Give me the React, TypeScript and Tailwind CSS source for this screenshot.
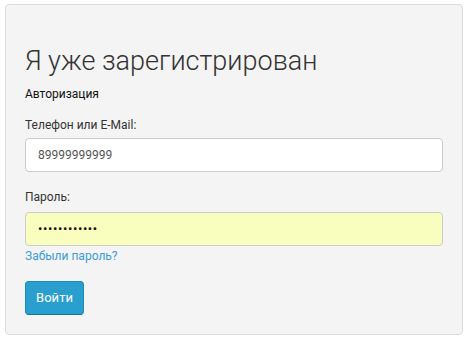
import React from "react";

export default function App() {
  return (
    <div className="w-[469px] h-[342px] bg-white" style={{ fontFamily: "Roboto, 'Liberation Sans', sans-serif" }}>
      <div className="ml-[5px] mt-[4px] w-[458px] h-[331px] bg-[#f4f4f4] border border-[#dcdcdc] rounded-[4px] pl-[19px] pr-[19px] pt-[41px]">
        <h1 className="text-[27px] leading-[30px] font-light text-[#333]">Я уже зарегистрирован</h1>
        <div className="mt-[10px] text-[12px] leading-[17px] font-normal text-[#111]">Авторизация</div>
        <div className="mt-[14px] text-[12px] leading-[17px] text-[#333]">Телефон или E-Mail:</div>
        <div className="mt-[4px] h-[34px] w-[418px] bg-white border border-[#ccc] rounded-[4px] flex items-center pl-[12px] text-[12px] text-[#555]">
          89999999999
        </div>
        <div className="mt-[17px] text-[12px] leading-[17px] text-[#333]">Пароль:</div>
        <div className="mt-[6px] h-[34px] w-[418px] bg-[#f9fdbd] border border-[#ccc] rounded-[4px] flex items-center pl-[12px] text-[13px] text-[#111] tracking-[0.6px]">
          ••••••••••••
        </div>
        <div className="mt-[2px] text-[12px] leading-[17px] text-[#3c9bd6]">Забыли пароль?</div>
        <button className="mt-[16px] h-[34px] w-[59px] rounded-[4px] bg-[#299fd0] border border-[#1f8bb8] border-b-[#17749c] text-white text-[13px] font-normal">
          Войти
        </button>
      </div>
    </div>
  );
}
